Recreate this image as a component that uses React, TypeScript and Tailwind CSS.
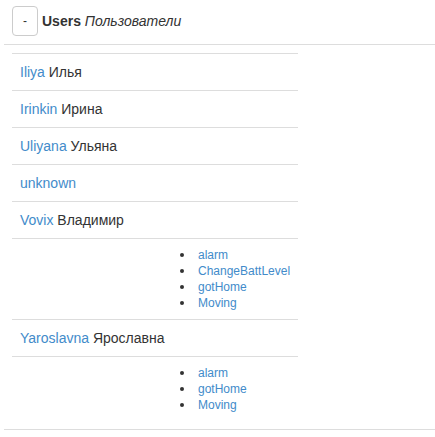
const users = [
  { login: "Iliya", name: "Илья" },
  { login: "Irinkin", name: "Ирина" },
  { login: "Uliyana", name: "Ульяна" },
  { login: "unknown", name: "" },
  { login: "Vovix", name: "Владимир", events: ["alarm", "ChangeBattLevel", "gotHome", "Moving"] },
  { login: "Yaroslavna", name: "Ярославна", events: ["alarm", "gotHome", "Moving"] },
];

export default function App() {
  return (
    <div className="min-h-screen bg-white pl-[4px] font-['Liberation_Sans',Arial,sans-serif] text-[#333]">
      <div className="flex items-center gap-[4px] pl-[8px] pt-[6px]">
        <button className="h-[30px] w-[26px] rounded-[4px] border border-[#ccc] bg-white text-xs leading-[18px] text-[#333]">
          -
        </button>
        <div className="text-sm leading-5">
          <b>Users</b> <i>Пользователи</i>
        </div>
      </div>
      <hr className="mt-[8px] border-t border-[#ddd]" />
      <div className="mt-[8px] ml-[8px] w-[286px] text-sm leading-5">
        {users.map((u) => (
          <div key={u.login}>
            <div className="border-t border-[#ddd] p-2">
              <a href="#" className="text-[#428bca]">{u.login}</a>
              {u.name && <span> {u.name}</span>}
            </div>
            {u.events && (
              <div className="border-t border-[#ddd] py-2">
                <ul className="ml-[168px] text-xs leading-4">
                  {u.events.map((e) => (
                    <li key={e} className="flex items-center gap-[14px]">
                      <span className="size-[4px] rounded-full bg-[#333]" />
                      <a href="#" className="text-[#428bca]">{e}</a>
                    </li>
                  ))}
                </ul>
              </div>
            )}
          </div>
        ))}
      </div>
      <hr className="mt-[8px] border-t border-[#ddd]" />
    </div>
  );
}
